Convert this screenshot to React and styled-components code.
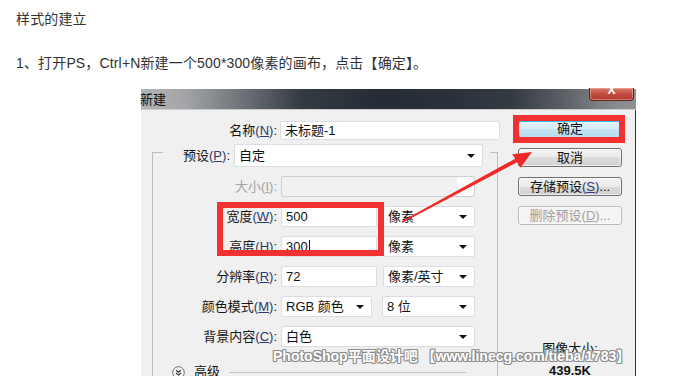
import React from 'react';
import styled, { createGlobalStyle } from 'styled-components';

const Global = createGlobalStyle`
  html, body { margin: 0; padding: 0; background: #fff; }
  body { font-family: "Liberation Sans", "Noto Sans CJK SC", sans-serif; overflow: hidden; }
  * { box-sizing: border-box; }
`;

const Page = styled.div`
  position: relative;
  width: 681px;
  height: 376px;
  overflow: hidden;
  padding: 7px 0 0 16px;
`;

const Para = styled.p`
  margin: 0 0 ${(p) => p.$gap}px;
  font-size: 14px;
  line-height: 24px;
  letter-spacing: 0.15px;
  color: #333;
`;

const Dialog = styled.div`
  margin-left: 125px;
  width: 495px;
  font-family: "Liberation Sans", "Noto Sans CJK SC", sans-serif;
  font-size: 13px;
  color: #151515;
`;

const TitleBar = styled.div`
  height: 21px;
  display: flex;
  align-items: flex-start;
  justify-content: space-between;
  background: linear-gradient(
    90deg,
    #b3b5b7 0px,
    #a2a4a7 45px,
    #6a6f75 105px,
    #353b43 160px,
    #262c35 240px,
    #2b313a 310px,
    #343a42 370px,
    #5a5e64 420px,
    #7e8286 460px,
    #8f9295 494px
  );
  border-bottom: 1px solid #c9cbcd;
`;

const Title = styled.span`
  font-size: 13px;
  line-height: 20px;
  color: #0c0c0c;
  font-family: "Noto Sans CJK SC", sans-serif;
  margin-left: -1px;
`;

const CloseBtn = styled.span`
  width: 45px;
  height: 13px;
  margin: -1px 2px 0 0;
  border: 1px solid #5e2620;
  border-top: none;
  border-radius: 0 0 4px 4px;
  background: linear-gradient(#d77c6e, #c24f42 45%, #b03a2e);
  box-shadow: inset 0 0 0 1px rgba(255, 200, 190, 0.45);
  color: #fff;
  font-weight: bold;
  font-size: 12px;
  line-height: 4px;
  text-align: center;
  overflow: hidden;
`;

const Body = styled.div`
  display: grid;
  grid-template-columns: 362px 1fr;
  height: 266px;
  background: #f0f0f0;
  border-right: 1px solid #2e2e2e;
  overflow: hidden;
`;

const FormCol = styled.div`
  padding-top: 11px;
`;

const Row = styled.div`
  display: grid;
  grid-template-columns: ${(p) => p.$label}px ${(p) => p.$field}px;
  column-gap: ${(p) => p.$gap}px;
  align-items: center;
  height: ${(p) => p.$h}px;
  margin-top: ${(p) => p.$mt || 0}px;
`;

const Label = styled.span`
  text-align: right;
  white-space: nowrap;
  line-height: 16px;
  color: ${(p) => (p.$disabled ? '#a3a3a3' : '#151515')};
`;

const Mn = styled.span`
  color: ${(p) => (p.$disabled ? '#a3a3a3' : '#2c3a6e')};
  u { text-underline-offset: 1px; }
`;

const Fields = styled.div`
  display: flex;
  gap: ${(p) => p.$gap || 0}px;
  height: 100%;
`;

const TextBox = styled.div`
  flex: ${(p) => (p.$w ? `0 0 ${p.$w}px` : '1')};
  height: 100%;
  display: flex;
  align-items: center;
  padding-left: 4px;
  background: #fff;
  border: 1px solid #dadde1;
  border-radius: 2px;
  line-height: 16px;
  color: #111;
  white-space: nowrap;
`;

const Caret = styled.span`
  margin-left: auto;
  margin-right: 7px;
  width: 0;
  height: 0;
  border-left: 4px solid transparent;
  border-right: 4px solid transparent;
  border-top: 4px solid #111;
`;

const DisabledBox = styled.div`
  height: 100%;
  border: 1px solid #cdd0d3;
  border-radius: 2px;
  background: linear-gradient(90deg, #f1f1f1 0, #f1f1f1 175px, #fbfbfb 175px);
`;

const Cursor = styled.span`
  display: inline-block;
  width: 1px;
  height: 13px;
  background: #111;
  margin-left: 1px;
`;

const Group = styled.div`
  margin: 12px 0 0 11px;
  width: 346px;
  height: 280px;
  border: 1px solid #bdbdbd;
  border-bottom: none;
`;

const PresetRow = styled.div`
  display: flex;
  align-items: center;
  gap: 4px;
  height: 23px;
  margin: -9px 7px 0 10px;
  padding: 0 7px 0 20px;
  background: #f0f0f0;
`;

const AdvRow = styled.div`
  display: flex;
  align-items: center;
  gap: 9px;
  height: 14px;
  margin: 18px 31px 0 19px;
  line-height: 14px;
`;

const AdvLine = styled.span`
  flex: 1;
  height: 1px;
  background: #c3c3c3;
`;

const SideCol = styled.div`
  display: flex;
  flex-direction: column;
  align-items: flex-start;
  gap: 10px;
  padding: 9px 13px 0 15px;
`;

const Btn = styled.div`
  width: 104px;
  height: 19px;
  display: flex;
  align-items: center;
  justify-content: center;
  line-height: 16px;
  border-radius: 3px;
  border: 1px solid ${(p) => (p.$disabled ? '#b7bbbf' : '#707070')};
  color: ${(p) => (p.$disabled ? '#a0a0a0' : '#111')};
  background: ${(p) =>
    p.$primary
      ? 'linear-gradient(#e6f4fa, #d8eef8 50%, #c4e4f3 50%, #b6dcee)'
      : p.$disabled
      ? '#f4f4f4'
      : 'linear-gradient(#f3f3f3, #ebebeb 50%, #dddddd 50%, #d0d0d0)'};
  box-shadow: ${(p) => (p.$primary ? 'inset 0 2px 0 #3cbbea' : 'inset 0 0 0 1px rgba(255,255,255,0.6)')};
`;

const Info = styled.div`
  align-self: stretch;
  margin-top: 106px;
  text-align: center;
  line-height: 16px;
  color: #111;
`;

const InfoValue = styled.div`
  margin-top: 6px;
  font-weight: bold;
  font-size: 13px;
`;

const Overlay = styled.svg`
  position: absolute;
  left: 0;
  top: 0;
  pointer-events: none;
`;

const Watermark = styled.div`
  position: absolute;
  left: 273px;
  top: 348px;
  font-size: 14px;
  font-weight: bold;
  line-height: 16px;
  white-space: nowrap;
  color: #fff;
  font-family: "Liberation Sans", "Noto Sans CJK SC", sans-serif;
  text-shadow: 1px 0 0 #8c8c8c, -1px 0 0 #8c8c8c, 0 1px 0 #8c8c8c, 0 -1px 0 #8c8c8c,
    1px 1px 0 #9a9a9a, -1px -1px 0 #9a9a9a, 1px -1px 0 #9a9a9a, -1px 1px 0 #9a9a9a;
`;

const M = ({ k, disabled }) => (
  <Mn $disabled={disabled}>
    (<u>{k}</u>)
  </Mn>
);

const Select = ({ children, w }) => (
  <TextBox $w={w}>
    {children}
    <Caret />
  </TextBox>
);

const AdvIcon = () => (
  <svg width="13" height="13" viewBox="0 0 13 13">
    <circle cx="6.5" cy="6.5" r="5.8" fill="#f8f8f8" stroke="#6d6d6d" strokeWidth="1" />
    <path d="M4 4.2 L6.5 6.2 L9 4.2 M4 7 L6.5 9 L9 7" fill="none" stroke="#333" strokeWidth="1.2" />
  </svg>
);

export default function App() {
  return (
    <>
      <Global />
      <Page>
        <Para $gap={20}>样式的建立</Para>
        <Para $gap={14}>1、打开PS，Ctrl+N新建一个500*300像素的画布，点击【确定】。</Para>
        <Dialog>
          <TitleBar>
            <Title>新建</Title>
            <CloseBtn>X</CloseBtn>
          </TitleBar>
          <Body>
            <FormCol>
              <Row $label={136} $field={220} $gap={3} $h={19}>
                <Label>
                  名称<M k="N" />:
                </Label>
                <TextBox>未标题-1</TextBox>
              </Row>
              <Group>
                <PresetRow>
                  <Label>
                    预设<M k="P" />:
                  </Label>
                  <Select>自定</Select>
                </PresetRow>
                <Row $label={124} $field={194} $gap={4} $h={21} $mt={9}>
                  <Label $disabled>
                    大小<M k="I" disabled />:
                  </Label>
                  <DisabledBox />
                </Row>
                <Row $label={124} $field={194} $gap={4} $h={21} $mt={9}>
                  <Label>
                    宽度<M k="W" />:
                  </Label>
                  <Fields $gap={6}>
                    <TextBox $w={96}>500</TextBox>
                    <Select>像素</Select>
                  </Fields>
                </Row>
                <Row $label={124} $field={194} $gap={4} $h={21} $mt={9}>
                  <Label>
                    高度<M k="H" />:
                  </Label>
                  <Fields $gap={6}>
                    <TextBox $w={96}>
                      300
                      <Cursor />
                    </TextBox>
                    <Select>像素</Select>
                  </Fields>
                </Row>
                <Row $label={124} $field={194} $gap={4} $h={21} $mt={9}>
                  <Label>
                    分辨率<M k="R" />:
                  </Label>
                  <Fields $gap={6}>
                    <TextBox $w={96}>72</TextBox>
                    <Select>像素/英寸</Select>
                  </Fields>
                </Row>
                <Row $label={124} $field={194} $gap={4} $h={21} $mt={9}>
                  <Label>
                    颜色模式<M k="M" />:
                  </Label>
                  <Fields $gap={10}>
                    <Select w={91}>RGB 颜色</Select>
                    <Select>8 位</Select>
                  </Fields>
                </Row>
                <Row $label={124} $field={194} $gap={4} $h={21} $mt={9}>
                  <Label>
                    背景内容<M k="C" />:
                  </Label>
                  <Select>白色</Select>
                </Row>
                <AdvRow>
                  <AdvIcon />
                  <span>高级</span>
                  <AdvLine />
                </AdvRow>
              </Group>
            </FormCol>
            <SideCol>
              <Btn $primary>确定</Btn>
              <Btn>取消</Btn>
              <Btn>
                存储预设<M k="S" />...
              </Btn>
              <Btn $disabled>
                删除预设<M k="D" disabled />...
              </Btn>
              <Info>
                <div>图像大小:</div>
                <InfoValue>439.5K</InfoValue>
              </Info>
            </SideCol>
          </Body>
        </Dialog>
        <Overlay width="681" height="376" viewBox="0 0 681 376">
          <rect x="220" y="205" width="161" height="48" fill="none" stroke="#f23232" strokeWidth="6" />
          <rect x="516" y="118" width="106" height="22" fill="none" stroke="#f23232" strokeWidth="6" />
          <polygon
            points="402.4,222.7 517.1,162.3 520.4,167.7 532,152 512.3,154.3 515.2,158.7 401.6,221.3"
            fill="#f02828"
          />
        </Overlay>
        <Watermark>PhotoShop平面设计吧 【www.linecg.com/tieba/1783】</Watermark>
      </Page>
    </>
  );
}
